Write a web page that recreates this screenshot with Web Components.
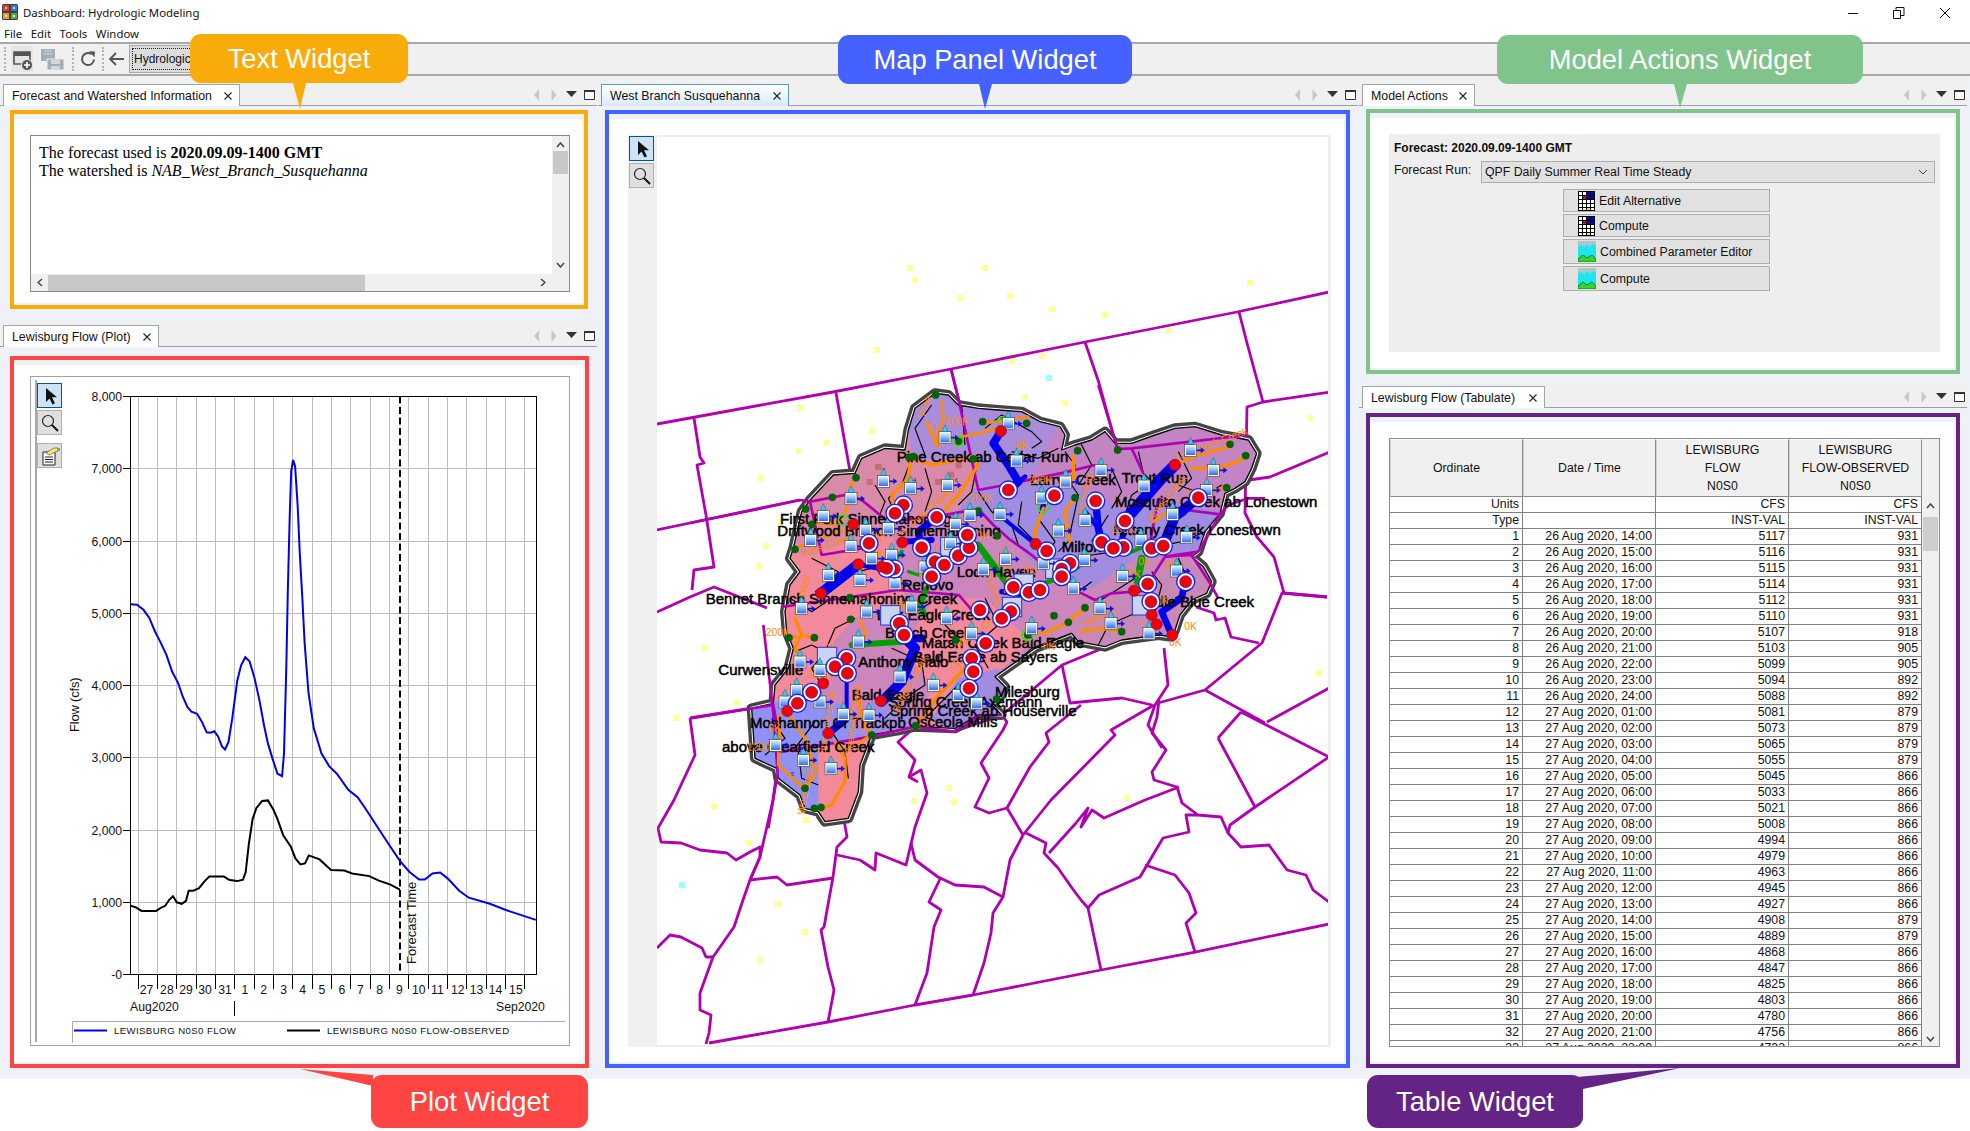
<!DOCTYPE html>
<html>
<head>
<meta charset="utf-8">
<title>Dashboard: Hydrologic Modeling</title>
<style>
  html, body { margin: 0; background: #fff; }
  body { width: 1970px; height: 1131px; overflow: hidden; font-family: "Liberation Sans", Arial, sans-serif; position: relative; }
  .workspace { display: grid; grid-template-columns: 600px 758px 612px; height: 1003px; background: #eef1f8; }
  .col { display: flex; flex-direction: column; }
</style>
</head>
<body>
<app-titlebar></app-titlebar>
<app-menubar></app-menubar>
<app-toolbar></app-toolbar>
<div class="workspace">
  <div class="col" style="padding-left:3px">
    <view-pane label="Forecast and Watershed Information" style="--tw:237px;--top:8px;--gap:4px;--mx:7px;--w:578px;--h:199px;--c:#f9ab0a;--end:597px"><text-view></text-view></view-pane>
    <view-pane label="Lewisburg Flow (Plot)" style="--tw:156px;--top:3px;--gap:9px;--mx:7px;--w:579px;--h:712px;--c:#ff4444;--end:597px;margin-top:13px"><plot-view></plot-view></view-pane>
  </div>
  <div class="col" style="padding-left:1px">
    <view-pane active label="West Branch Susquehanna" style="--tw:188px;--top:8px;--gap:4px;--mx:4px;--w:745px;--h:958px;--c:#4561ff;--end:760px"><map-view></map-view></view-pane>
  </div>
  <div class="col" style="padding-left:4px">
    <view-pane label="Model Actions" style="--tw:113px;--top:8px;--gap:3px;--mx:4px;--w:594px;--h:265px;--c:#80c48c;--end:608px"><actions-view></actions-view></view-pane>
    <view-pane label="Lewisburg Flow (Tabulate)" style="--tw:183px;--top:3px;--gap:5px;--mx:4px;--w:594px;--h:655px;--c:#642485;--end:608px;margin-top:9px"><table-view></table-view></view-pane>
  </div>
</div>
<call-out label="Text Widget" color="#f9ab0a" box="190,34,218,49" tail="103,49 116,49 110,75"></call-out>
<call-out label="Map Panel Widget" color="#4561ff" box="838,35,294,49" tail="141,49 154,49 147,74"></call-out>
<call-out label="Model Actions Widget" color="#80c48c" box="1497,35,366,49" tail="177,49 190,49 183,73"></call-out>
<call-out label="Plot Widget" color="#ff4444" box="371,1075,217,53" tail="2,0 2,11 -71,-6"></call-out>
<call-out label="Table Widget" color="#642485" box="1367,1075,216,53" tail="210,2 216,14 313,-7"></call-out>

<script>
const SANS = '"Liberation Sans", Arial, sans-serif';

class AppTitlebar extends HTMLElement {
  constructor() {
    super();
    this.attachShadow({ mode: "open" });
  }

  connectedCallback() {
    this.shadowRoot.innerHTML = /* html */`
    <style>
      :host { display: flex; align-items: center; height: 25px; background: #fff; font: 11.4px "Noto Sans", sans-serif; color: #111; }
      .logo { margin: 0 5px 1px 2px; }
      .name { flex: 1; }
      .btn { width: 46px; display: flex; justify-content: center; }
    </style>
    <svg class="logo" width="16" height="16" viewBox="0 0 16 16">
      <rect width="16" height="16" rx="1.5" fill="#3d4048"/>
      <rect x="1" y="1" width="6" height="6" fill="#e23b2e"/><rect x="9" y="1" width="6" height="6" fill="#2f7fd0"/>
      <rect x="1" y="9" width="6" height="6" fill="#f29a1f"/><rect x="9" y="9" width="6" height="6" fill="#58a846"/>
      <path d="M3 3h2v2H3zM11 3h2v2h-2zM3 11h2v2H3zM11 11h2v2h-2z" fill="#fff" opacity=".7"/>
    </svg>
    <span class="name">Dashboard: Hydrologic Modeling</span>
    <span class="btn"><svg width="12" height="12"><path d="M1 6.5h10" stroke="#111"/></svg></span>
    <span class="btn"><svg width="12" height="12"><path d="M.5 3.5h7v8h-7zM3 3V.5h8v8H8" fill="none" stroke="#111"/></svg></span>
    <span class="btn" style="margin-right:2px"><svg width="12" height="12"><path d="M1 1l10 10M11 1L1 11" stroke="#111"/></svg></span>`;
  }
}
customElements.define("app-titlebar", AppTitlebar);

class AppMenubar extends HTMLElement {
  constructor() {
    super();
    this.attachShadow({ mode: "open" });
    this.shadowRoot.innerHTML = /* html */`
    <style>
      :host { display: flex; gap: 8.5px; height: 17px; padding-left: 4px; align-items: center; font: 11.4px "Noto Sans", sans-serif; color: #111; background: #fff; }
    </style>
    <span>File</span><span>Edit</span><span>Tools</span><span>Window</span>`;
  }
}
customElements.define("app-menubar", AppMenubar);

class AppToolbar extends HTMLElement {
  constructor() {
    super();
    this.attachShadow({ mode: "open" });
    this.shadowRoot.innerHTML = /* html */`
    <style>
      :host { display: flex; align-items: center; height: 30px; background: #f0f0f0; border-top: 2px solid #a8a8a8; border-bottom: 2px solid #a8a8a8; font: 12px "Liberation Sans", sans-serif; box-sizing: content-box; }
      .sep { width: 0; height: 24px; border-left: 2px dotted #b4b4b4; }
      svg { display: block; }
      .combo { width: 130px; height: 28px; box-sizing: border-box; border: 1px solid #a8a8a8; background: #dcdcdc; padding: 2px; margin-left: 4px; }
      .combo div { height: 100%; box-sizing: border-box; border: 1px dotted #222; line-height: 21px; padding-left: 1px; color: #111; }
    </style>
    <span class="sep" style="margin-left:4px"></span>
    <svg width="22" height="26" style="margin-left:5px;background:#e6e6e6" viewBox="0 0 22 26">
      <path d="M3 6h16v4H3z" fill="#555"/><path d="M3 6h16v12H3z" fill="none" stroke="#555" stroke-width="1.6"/>
      <circle cx="16" cy="19" r="5.5" fill="#555" stroke="#e6e6e6"/><path d="M13 19h6M16 16v6" stroke="#fff" stroke-width="1.6"/>
    </svg>
    <svg width="25" height="26" style="margin-left:7px" viewBox="0 0 25 26">
      <path d="M1 3h14v12H1z" fill="#a4adb6"/><path d="M4 5h8M4 8h8" stroke="#d8dde2"/>
      <path d="M7 13h17v11H7z" fill="#a4adb6" stroke="#f0f0f0"/><path d="M11 14h9v4h-9zM11 20h9v4h-9z" fill="#d4d9de"/>
    </svg>
    <span class="sep" style="margin-left:7px"></span>
    <svg width="18" height="18" style="margin-left:5px" viewBox="0 0 18 18">
      <path d="M15 9.5A6 6 0 1 1 12.5 4.2" fill="none" stroke="#555" stroke-width="2"/><path d="M10 1.2l6 .2-.5 6z" fill="#555"/>
    </svg>
    <span class="sep" style="margin-left:5px"></span>
    <svg width="16" height="16" style="margin-left:4px" viewBox="0 0 16 16">
      <path d="M16 8H2M8 2L2 8l6 6" fill="none" stroke="#555" stroke-width="1.8"/>
    </svg>
    <div class="combo" style="margin-left:5px"><div>Hydrologic</div></div>`;
  }
}
customElements.define("app-toolbar", AppToolbar);

class ViewPane extends HTMLElement {
  constructor() {
    super();
    this.attachShadow({ mode: "open" });
  }

  connectedCallback() {
    const active = this.hasAttribute("active");
    this.shadowRoot.innerHTML = /* html */`
    <style>
      :host { display: block; }
      .strip { display: flex; width: var(--end); box-sizing: border-box; height: calc(22px + var(--top)); padding-top: var(--top); background: #f0f0f0; border-bottom: 1px solid #9a9fa6; margin-left: -3px; padding-left: 3px; align-items: flex-end; }
      .tab { display: flex; justify-content: space-between; align-items: center; box-sizing: border-box; width: var(--tw); height: 22px; margin-bottom: -1px; padding: 0 6px 0 8px; border: 1px solid #a0a5ab; border-bottom: 0; background: #fff; font: 12.35px ${SANS}; color: #111; white-space: nowrap; }
      .tab.active { border-color: #5a9ac8; background: linear-gradient(#fff, #d9e9fa); }
      .ctl { margin-left: auto; margin-right: 2.5px; display: block; margin-bottom: 4px; }
      .frame { display: flex; flex-direction: column; box-sizing: border-box; width: var(--w); height: var(--h); margin: var(--gap) 0 0 var(--mx); border: 4px solid var(--c); background: #eef1f8; padding: 5px 2px 2px 0; }
      .inner { flex: 1; min-height: 0; background: #fff; padding: 16px 12px 11px 16px; display: flex; }
    </style>
    <div class="strip">
      <div class="tab ${active ? "active" : ""}">
        <span>${this.getAttribute("label")}</span>
        <svg width="10" height="10"><path d="M1.5 1.5l7 7M8.5 1.5l-7 7" stroke="#222" stroke-width="1.1"/></svg>
      </div>
      <svg class="ctl" width="62" height="12" viewBox="0 0 62 12">
        <path d="M6 0v12L1 6z" fill="#c8c8c8"/><path d="M18.500 0v12l5-6z" fill="#c8c8c8"/>
        <path d="M33 2h11l-5.500 6z" fill="#333"/><path d="M51.500 1.500h10v9h-10z" fill="#fff" stroke="#333"/><path d="M51 1h11v2H51z" fill="#333"/>
      </svg>
    </div>
    <div class="frame"><div class="inner"><slot></slot></div></div>`;
  }
}
customElements.define("view-pane", ViewPane);

class TextView extends HTMLElement {
  constructor() {
    super();
    this.attachShadow({ mode: "open" });
    this.shadowRoot.innerHTML = /* html */`
    <style>
      :host { display: grid; grid-template-columns: 1fr 17px; grid-template-rows: 1fr 17px; flex: 1; border: 1px solid #868a90; font: 16px/18px "Liberation Serif", serif; color: #000; background: #f0f0f0; }
      .text { background: #fff; padding: 8px 8px; }
      .vbar, .hbar { position: relative; display: flex; }
      .vbar { flex-direction: column; align-items: center; justify-content: space-between; padding: 6px 0; }
      .vthumb { width: 15px; height: 23px; background: #c8c8c8; margin-top: 3px; margin-bottom: auto; }
      .hbar { align-items: center; padding: 0 6px; }
      .hthumb { width: 317px; height: 16px; background: #c8c8c8; margin-left: 5px; margin-right: auto; }
      svg { display: block; }
    </style>
    <div class="text">The forecast used is <b>2020.09.09-1400 GMT</b><br>The watershed is <i>NAB_West_Branch_Susquehanna</i></div>
    <div class="vbar">
      <svg width="9" height="6"><path d="M1 5l3.500-4L8 5" fill="none" stroke="#444" stroke-width="1.500"/></svg>
      <div class="vthumb"></div>
      <svg width="9" height="6"><path d="M1 1l3.500 4L8 1" fill="none" stroke="#444" stroke-width="1.500"/></svg>
    </div>
    <div class="hbar">
      <svg width="6" height="9"><path d="M5 1L1 4.500 5 8" fill="none" stroke="#444" stroke-width="1.500"/></svg>
      <div class="hthumb"></div>
      <svg width="6" height="9"><path d="M1 1l4 3.500L1 8" fill="none" stroke="#444" stroke-width="1.500"/></svg>
    </div>
    <div></div>`;
  }
}
customElements.define("text-view", TextView);

class ToolStrip extends HTMLElement {
  constructor() {
    super();
    this.attachShadow({ mode: "open" });
  }

  connectedCallback() {
    const icons = {
      arrow: `<path d="M7 3l0 14 3.500-3.500 3 6 2.500-1.200-3-6 5 0z" fill="#111"/>`,
      zoom: `<circle cx="9" cy="9" r="5.500" fill="none" stroke="#222" stroke-width="1.200"/><path d="M13 13l6 6" stroke="#111" stroke-width="2"/>`,
      props: `<path d="M4 7h12v13H4z" fill="#fff" stroke="#222"/><path d="M6 12h8M6 14.500h8M6 17h8" stroke="#222"/><path d="M7 8l8-5 4 0 0 3-9 4z" fill="#ffe96a" stroke="#444" stroke-width=".6"/><path d="M18 3h3v3h-3z" fill="#4fc24f"/>`
    };
    const items = this.getAttribute("items").split(",");
    const size = this.getAttribute("size").split("x").map(Number);
    this.shadowRoot.innerHTML = /* html */`
    <style>
      :host { display: flex; flex-direction: column; gap: 2px; }
      .b { box-sizing: border-box; width: ${size[0]}px; height: ${size[1]}px; background: #dfdfdf; border: 1px solid #b0b0b0; display: flex; align-items: center; justify-content: center; }
      .b.on { background: #cce4f7; border-color: #005499; }
      .b.gap { margin-top: 6px; }
    </style>
    ${items.map((k, i) => `<div class="b ${i === 0 ? "on" : ""} ${k === "props" ? "gap" : ""}"><svg width="22" height="22" viewBox="0 0 22 22">${icons[k]}</svg></div>`).join("")}`;
  }
}
customElements.define("tool-strip", ToolStrip);

class PlotView extends HTMLElement {
  constructor() {
    super();
    this.attachShadow({ mode: "open" });
  }

  // points were read off a stretched crop, so both axes have their own scale
  static path(pts) {
    return pts.map((p, i) => (i ? "L" : "M") + (p[0] / 2.613).toFixed(1) + " " + (340 + p[1] / 1.983).toFixed(1)).join("");
  }

  connectedCallback() {
    const blue = [[341,524],[358,525],[375,535],[390,551],[405,578],[420,600],[435,625],[450,658],[465,680],[478,708],[490,728],[500,737],[515,741],[528,758],[540,778],[550,779],[560,776],[570,786],[580,806],[588,812],[597,797],[607,750],[620,675],[630,645],[641,629],[652,637],[665,670],[678,715],[690,765],[700,800],[712,830],[725,860],[737,865],[742,820],[748,650],[752,500],[757,350],[761,260],[766,238],[771,250],[778,330],[783,420],[790,510],[796,600],[806,700],[820,770],[840,820],[860,845],[880,860],[910,892],[935,907],[960,935],[990,970],[1020,1005],[1045,1033],[1070,1055],[1095,1070],[1110,1070],[1130,1058],[1150,1056],[1170,1068],[1200,1092],[1225,1106],[1280,1118],[1320,1130],[1400,1150]];
    const black = [[341,1122],[355,1125],[370,1132],[390,1132],[408,1132],[420,1126],[432,1122],[442,1110],[452,1103],[462,1115],[475,1118],[486,1112],[493,1092],[505,1092],[520,1087],[535,1073],[547,1064],[585,1064],[600,1071],[620,1073],[635,1070],[642,1055],[650,1000],[660,950],[670,928],[685,914],[700,913],[715,932],[725,950],[740,982],[760,1005],[772,1028],[785,1040],[797,1038],[807,1022],[835,1030],[865,1051],[900,1052],[920,1058],[965,1063],[990,1072],[1020,1080],[1045,1090]];
    const gridZ = [361,412,462,513,563,613,664,714,765,816,866,917,968,1018,1068,1119,1169,1219,1271,1321,1371];
    const labZ = [383,436,486,536,588,640,689,741,791,841,893,942,992,1044,1094,1143,1196,1245,1295,1348];
    const days = ["27","28","29","30","31","1","2","3","4","5","6","7","8","9","10","11","12","13","14","15"];
    const L = 130.5, R = 536.5, T = 396.5, B = 974.5;
    let grid = "", ticks = "", ylab = "", xlab = "";
    gridZ.forEach(z => {
      const x = (z / 2.613).toFixed(1);
      grid += `<path d="M${x} ${T}V${B}" stroke="#bdbdbd"/>`;
      ticks += `<path d="M${x} ${B}v14" stroke="#000"/>`;
    });
    for (let i = 0; i <= 8; i++) {
      const y = B - i * (B - T) / 8;
      if (i > 0 && i < 8) grid += `<path d="M${L} ${y}H${R}" stroke="#bdbdbd"/>`;
      ticks += `<path d="M123 ${y}H${L}" stroke="#000"/>`;
      const t = i === 0 ? "-0" : i + ",000";
      ylab += `<text x="122" y="${y + 4.500}" text-anchor="end">${t}</text>`;
    }
    labZ.forEach((z, i) => { xlab += `<text x="${(z / 2.613).toFixed(1)}" y="994" text-anchor="middle">${days[i]}</text>`; });
    this.shadowRoot.innerHTML = /* html */`
    <style>
      :host { display: flex; flex: 1; border: 1px solid #a0a0a0; margin: -5px 1px 0 0; height: 670px; box-sizing: border-box; }
      .side { width: 33px; flex: none; box-sizing: border-box; padding: 3px 0 0 0; margin: 3px 0 3px 4px; border-left: 2px solid #a8a8a8; }
      svg.c { display: block; flex: none; }
      text { font: 12.2px ${SANS}; fill: #111; }
    </style>
    <tool-strip class="side" items="arrow,zoom,props" size="25x25"></tool-strip>
    <svg class="c" width="501" height="668" viewBox="68 377 501 668">
      <g shape-rendering="crispEdges">${grid}</g>
      <rect x="${L}" y="${T}" width="${R - L}" height="${B - T}" fill="none" stroke="#000" shape-rendering="crispEdges"/>
      <g shape-rendering="crispEdges">${ticks}</g>
      ${ylab}${xlab}
      <text x="130" y="1011">Aug2020</text><text x="496" y="1011">Sep2020</text>
      <path d="M234.500 1001v15" stroke="#000"/>
      <text transform="translate(79 732) rotate(-90)" style="font-size:13px;letter-spacing:-.2px">Flow (cfs)</text>
      <path d="M400 396.500V974.500" stroke="#000" stroke-width="2" stroke-dasharray="7 3.500"/>
      <text transform="translate(416 964) rotate(-90)" style="font-size:13px">Forecast Time</text>
      <path d="${PlotView.path(black)}" fill="none" stroke="#000" stroke-width="2"/>
      <path d="${PlotView.path(blue)}" fill="none" stroke="#0000f0" stroke-width="2"/>
      <path d="M72.500 1043V1021.500H565" fill="none" stroke="#a8a8a8"/>
      <path d="M74 1030.500h33" stroke="#0000f0" stroke-width="2"/><path d="M287 1030.500h33" stroke="#000" stroke-width="2"/>
      <text x="114" y="1034" style="font-size:9.600px;letter-spacing:.4px">LEWISBURG N0S0 FLOW</text>
      <text x="327" y="1034" style="font-size:9.600px;letter-spacing:.42px">LEWISBURG N0S0 FLOW-OBSERVED</text>
    </svg>`;
  }
}
customElements.define("plot-view", PlotView);

class MapView extends HTMLElement {
  constructor() {
    super();
    this.attachShadow({ mode: "open" });
  }

  static pl(points) {
    return points.map(l => `<polyline points="${l}"/>`).join("");
  }

  connectedCallback() {
    // county boundaries, page coordinates
    const county = [
      "657,424 690,418 833,392 951,369 1085,342 1237,312 1329,292",
      "1085,342 1099,383 1116,445",
      "1239,312 1247,343 1263,402 1247,407 1245,513 1257,537 1274,557 1284,593 1327,597",
      "1263,402 1330,392", "1249,480 1270,477 1330,452",
      "951,369 958,397 968,452 980,490", "836,393 851,477",
      "694,418 700,457 704,463 697,465 706,515 714,567 694,570 692,590",
      "657,530 690,523 800,500", "657,612 690,597 714,587 767,608",
      "690,718 772,705",
      "690,718 695,755 674,800 658,828 661,842 681,843 700,850 727,853 736,860 750,852 760,847 760,857 750,880",
      "777,770 773,800 760,857 750,880 743,900 734,927 713,957 700,993 700,1010 711,1015 709,1033 706,1044",
      "750,880 777,877 787,885 833,878",
      "657,948 670,935 681,937 702,948 706,957 713,957",
      "844,820 847,837 837,847 833,877 824,927 821,930 828,967 834,990 828,1022",
      "837,855 860,860 875,870 876,853 906,865 915,827 927,793 921,770 909,777 918,782",
      "915,727 898,742 915,760 909,777",
      "911,843 915,860 938,877 955,885 984,887 1003,897 993,913 991,933 984,963 973,995",
      "941,877 929,902 941,910 934,927 927,973 915,1005",
      "1023,835 1010,860 1003,897", "1007,808 1023,835",
      "1007,808 989,813 975,807 989,778 981,763 1003,730 1007,722 1002,715",
      "1007,808 1030,767 1049,742 1046,733 1081,705",
      "1023,835 1051,800 1115,735 1111,730 1154,705",
      "953,732 1002,715 1062,665 1118,642 1172,635",
      "1062,665 1070,703 1122,698 1152,705",
      "1158,703 1205,690 1262,643 1282,593 1327,597",
      "1205,690 1265,723", "1241,712 1329,757", "1267,722 1329,688",
      "1218,738 1255,807 1329,757", "1218,738 1241,712",
      "1255,807 1230,825 1228,833 1241,847 1269,845 1287,870 1306,875 1313,890 1329,902",
      "1228,833 1221,817 1198,815 1182,803 1177,787 1154,780 1152,772 1166,750 1152,733 1157,717 1159,700",
      "1179,787 1145,800 1104,818 1092,810 1081,827 1088,808 1076,823 1049,853",
      "1198,815 1186,815 1189,832 1163,838 1140,877 1099,895 1088,908 1081,900 1072,888 1058,868 1044,853 1046,843 1026,833",
      "1088,908 1101,970", "1145,865 1175,875 1189,893 1196,913 1186,923 1195,952",
      "709,1043 828,1022 915,1005 973,995 1101,970 1195,952 1329,924",
      "1164,648 1168,685 1155,705 1148,725 1162,748", "1196,607 1214,613 1216,620 1225,618 1231,637 1259,643"
    ];
    const dots = [[910,268],[985,268],[915,280],[960,298],[1010,296],[1052,309],[1105,315],[1250,283],[1169,330],[877,350],[1012,361],[1042,356],[1025,397],[800,408],[827,443],[799,451],[761,478],[872,431],[780,522],[766,546],[759,566],[704,648],[737,703],[1065,403],[1311,418],[1319,673],[949,788],[914,801],[954,802],[1127,798],[714,807],[676,718],[778,904],[805,932],[760,960],[749,843],[806,820]];
    const cyan = [[1049,378],[682,885]];
    // everything below: basin coordinates, 3 units to a page pixel from (745,385)
    const outline = "570,25 610,30 640,60 700,70 760,75 830,80 885,110 945,125 960,150 950,195 990,180 1040,165 1080,140 1110,175 1160,175 1230,150 1290,130 1350,125 1430,150 1510,165 1535,205 1520,250 1500,290 1470,310 1440,325 1425,385 1380,440 1360,500 1340,515 1375,545 1400,590 1385,625 1340,645 1305,690 1290,735 1280,755 1240,750 1130,765 1080,785 1000,770 980,745 870,790 750,875 780,905 770,930 740,960 770,990 700,990 630,1030 510,1025 465,1035 380,1050 345,1140 340,1220 310,1300 240,1310 220,1280 180,1270 165,1230 100,1180 95,1150 30,1120 20,970 85,955 90,900 130,850 145,790 125,740 120,680 135,600 165,560 135,520 145,490 170,380 195,345 265,270 330,265 350,220 420,190 480,195 490,135 510,70";
    const fills = [
      ["#cc86bc", outline],
      ["#d88aa8", "0,150 500,150 700,220 700,380 440,420 200,520 0,520"],
      ["#a98cdc", "480,0 980,0 980,240 850,290 790,310 700,320 690,230 500,220"],
      ["#c284c2", "950,100 1600,100 1600,330 1400,330 1240,340 1150,390 1050,320 950,300 850,290"],
      ["#a08ce0", "690,310 860,280 1050,320 1150,390 1240,340 1430,380 1360,510 1200,500 1040,610 900,570 790,460 700,370 620,400"],
      ["#f28a9c", "0,500 210,510 440,420 480,640 330,700 240,800 260,900 150,960 0,960"],
      ["#cc86bc", "620,400 790,460 900,570 1040,620 1000,680 880,760 800,800 720,640 660,620 520,640 470,620 440,440"],
      ["#c888b8", "1040,610 1200,500 1350,510 1440,620 1300,760 1130,780 980,760 880,770 1000,680"],
      ["#f28a9c", "560,640 720,640 860,770 750,870 620,1040 520,1040 560,900 470,790"],
      ["#cc86bc", "330,700 480,640 570,640 470,790 560,900 510,1030 380,1060 350,1000 300,950 240,800"],
      ["#8f92f4", "0,950 150,950 300,960 360,1060 280,1100 250,1330 0,1330"],
      ["#a28ce2", "640,880 760,850 800,1000 620,1040 560,1000"],
      ["#a28ce2", "360,1060 380,950 480,930 520,1040 380,1060"],
      ["#f28a9c", "220,1090 370,1060 340,1330 220,1330"]
    ];
    const clines = [
      "500,220 470,300 430,340 450,385", "390,300 420,350 400,400", "540,250 560,320 540,380", "700,220 680,320 640,360",
      "720,130 770,90 860,140 890,170 860,190", "960,200 990,240 980,300 1000,330 970,470 940,500", "1180,200 1195,265 1220,290 1160,330 1140,390",
      "700,320 740,380 800,420 820,480 850,500", "830,350 820,420 870,470", "1430,300 1380,330 1300,300", "1380,440 1310,470 1260,480",
      "1090,390 1040,470", "960,560 1040,510 1110,500", "1040,590 1000,620 1040,640", "1200,520 1170,580 1060,650",
      "1300,520 1340,610 1290,640", "200,520 280,560 250,600 210,620", "135,640 200,680 260,640 330,650", "330,700 270,730 240,800 200,780 150,800",
      "470,630 500,690 560,650", "640,680 600,720 640,760 600,790", "720,640 760,720 690,780 730,850",
      "440,790 530,830 540,900 480,940", "240,800 200,850 230,900", "300,960 260,1040 300,1100 310,1180", "160,1100 170,1180 220,1200", "210,1010 150,1090 210,1100",
      "420,1000 470,950", "540,1000 640,900", "980,745 860,790 760,880", "1060,780 1090,720 1180,680",
      "1000,160 1040,240 1000,300", "1100,250 1130,320 1100,370", "1300,200 1340,280 1300,320", "560,60 510,130 540,210", "650,60 660,180", "800,200 880,220 940,190", "880,400 930,470 900,520", "1220,560 1250,600 1230,680", "340,560 420,540 470,580", "80,1000 120,1060 60,1110"
    ];
    const mag = [
      "618,-48 639,36 700,315 780,300 960,262 1050,240", "1060,0 1118,192 1160,190 1510,150", "1160,190 1195,265",
      "-165,414 165,345 195,350 300,330 350,345 430,410 570,395 700,372 745,420 790,460 860,510 920,560 1000,620 1050,645 1100,625 1195,618 1260,515 1340,510 1395,595 1420,640",
      "195,350 230,510 350,490", "110,666 460,615 642,630 680,675", "55,720 85,985 98,1165 70,1330", "-165,1000 85,960 110,1100 290,1070 380,1055 510,1025 625,1040 700,995 770,990",
      "1240,340 1300,372 1425,388 1360,500 1260,515", "1425,388 1450,360 1510,340 1560,340", "1240,340 1210,500"
    ];
    const blue = [
      [24, "768,138 745,175 790,240 820,290 795,315"], [14, "795,315 840,275"], [12, "750,380 870,477"], [34, "1290,240 1250,280 1140,405"], [22, "1052,348 1060,430 1070,470"], [30, "1360,338 1290,395 1255,480"],
      [22, "575,397 520,440 530,488"], [32, "340,538 228,625"], [16, "340,538 430,555"], [18, "470,470 560,465"], [14, "1060,430 1020,380"], [18, "1140,420 1130,470"], [16, "900,340 890,380"],
      [30, "490,770 510,790 470,890 410,950"], [12, "305,865 305,980"], [22, "250,1045 300,1005"], [20, "1320,590 1310,640 1250,680 1280,750"], [24, "480,760 530,760"], [16, "770,620 840,630"], [20, "520,490 590,540"]
    ];
    const green = [
      [20, "700,480 760,560 790,600"], [16, "545,610 525,660 540,690"], [22, "1190,520 1178,590"], [14, "1000,545 940,580 880,600"], [18, "320,780 400,775 470,770"], [12, "470,500 440,540"], [10, "490,560 520,570"], [12, "1160,500 1210,480"], [8, "770,100 790,120"]
    ];
    const orange = [
      [8, "590,50 595,100 570,180"], [8, "545,115 575,180"], [10, "500,222 560,240 680,215 700,240 640,330 580,395"], [8, "600,165 700,145 760,130"], [8, "720,115 850,95"],
      [10, "495,230 490,280 440,330 450,385"], [8, "320,290 310,360 280,420 205,415"], [8, "150,490 230,460 320,430"], [10, "985,215 985,280 970,300"], [10, "990,340 960,380 975,470"], [10, "895,370 870,440 875,470"],
      [10, "1500,220 1420,250 1340,250"], [10, "1455,185 1360,210 1290,240"], [8, "1445,310 1330,320"], [10, "1285,370 1225,410"], [8, "780,490 790,570 780,620"],
      [10, "132,758 165,755 150,790 175,825"], [10, "210,760 170,750 150,700"], [11, "512,1022 590,920 670,840 690,820"], [10, "380,1050 355,1010 340,940"], [10, "1020,670 970,710 900,745 850,740"], [10, "1130,740 1070,730 1010,740"],
      [9, "105,990 100,1140 170,1205"], [9, "130,990 180,1060 215,1160 180,1210"], [10, "270,1070 300,1120 300,1190 260,1260 230,1270"], [8, "380,1050 330,1080"], [8, "345,705 365,755"]
    ];
    const greens = [[572,30],[713,110],[845,115],[642,170],[492,217],[505,215],[685,222],[998,197],[1118,195],[1455,178],[1502,212],[1445,308],[990,338],[333,278],[262,337],[182,372],[200,418],[150,493],[700,378],[757,452],[315,638],[317,703],[132,758],[208,758],[632,765],[970,712],[927,692],[1020,668],[1130,740],[848,750],[755,942],[512,1022],[380,1050],[180,1210],[208,1270],[228,1267]];
    const gauges = [[415,283],[497,305],[608,295],[318,335],[235,388],[197,460],[318,478],[362,430],[430,425],[380,515],[440,505],[632,412],[617,470],[675,385],[765,382],[815,222],[790,110],[600,152],[890,333],[962,285],[1068,250],[1197,297],[1020,400],[940,432],[1188,460],[1283,382],[1325,452],[1337,190],[1405,250],[1385,310],[1133,568],[1295,552],[1018,520],[985,605],[895,530],[782,517],[715,548],[345,580],[250,565],[450,590],[540,540],[500,660],[170,665],[365,675],[605,695],[340,765],[680,740],[860,725],[1098,710],[1212,740],[1065,665],[165,825],[225,850],[565,895],[465,870],[640,925],[695,950],[155,910],[120,945],[225,945],[295,982],[372,985],[92,1075],[175,1120],[258,1145]];
    const pads = [[435,690],[1190,660],[245,815],[800,665],[615,485],[930,550],[835,595]];
    const ringed = [[475,360],[450,385],[575,397],[530,488],[372,475],[570,530],[598,540],[640,512],[672,488],[667,450],[448,552],[425,550],[560,575],[790,315],[928,332],[1052,348],[1140,408],[1070,472],[1135,487],[1105,490],[1220,490],[1255,483],[905,498],[975,535],[950,552],[950,575],[805,607],[852,622],[885,615],[1208,597],[1322,590],[1360,338],[1218,650],[463,715],[477,750],[705,675],[798,680],[770,700],[722,775],[680,820],[685,860],[672,910],[305,820],[270,845],[307,865],[200,922],[157,955]];
    const reds = [[768,138],[325,418],[472,472],[340,538],[228,625],[1290,240],[872,477],[1167,617],[1235,718],[1220,690],[1282,750],[235,895],[127,978],[250,1045],[408,948],[410,545]];
    const names = [
      [455,232,"Pine Creek ab Cedar Run"],[105,416,"First Fork Sinnemahoning"],[97,453,"Driftwood Branch Sinnemahoning"],[-118,657,"Bennet Branch Sinnemahoning Creek"],
      [855,300,"Larrys Creek"],[1130,295,"Trout Run"],[1110,365,"Mosquito Creek ab Lonestown"],[1105,450,"Nittany Creek Lonestown"],[950,500,"Milton"],[470,615,"Renovo"],[635,575,"Lock Haven"],
      [395,705,"Lick Eagle Creek"],[420,760,"Beech Creek"],[530,790,"Marsh Creek Bald Eagle"],[1160,665,"Middle Blue Creek"],[505,830,"Bald Eagle ab Sayers"],[-80,870,"Curwensville"],[340,845,"Anthony Halo"],
      [320,945,"Bald Eagle"],[750,935,"Milesburg"],[430,965,"Spring Creek Axemann"],[435,993,"Spring Creek ab Houserville"],[490,1027,"Osceola Mills"],[15,1030,"Moshannon Cr Trackpb"],[-69,1100,"above Clearfield Creek"]
    ];
    const kLabels = [[600,120,"200K"],[812,192,"0K"],[850,298,"200K"],[672,350,"200K"],[1098,445,"200K"],[378,470,"0K"],[450,450,"0K"],[380,518,"0K"],[570,503,"0K"],[695,462,"0K"],[920,548,"0K"],[1025,535,"0K"],[1180,540,"0K"],[1262,552,"0K"],[1150,580,"0K"],[1232,656,"0K"],[520,575,"600K"],[835,570,"0K"],[62,752,"200K"],[190,880,"1000K"],[452,672,"0K"],[240,800,"0K"],[1318,735,"0K"],[1272,782,"0K"],[893,796,"0K"],[618,852,"0K"],[435,735,"0K"],[5,1098,"1200K"],[70,1040,"0K"],[1165,650,"0K"]];
    const streams = [[175,515,-18,"West Creek"],[505,430,-42,"Pine Creek"],[548,115,68,"Creek"],[540,95,-70,"Pine"],[1010,400,-75,"Lycoming"],[1220,410,-50,"Antes Creek"],[1295,225,-20,"Loyalsock Creek"],[460,985,-62,"Buffalo Creek"],[180,640,-75,"West"],[320,1120,-82,"Clearfield Creek"],[240,1110,-80,"Susquehanna"],[720,570,70,"Fishing"],[1020,730,-30,"Sinking"],[640,790,-35,"Marsh Creek"],[178,1290,-80,"West Branch"]];

    const gauge = (x, y) => `<use href="#gauge" x="${x}" y="${y}"/>`;
    this.shadowRoot.innerHTML = /* html */`
    <style>
      :host { display: flex; flex: 1; height: 912px; background: #f0f0f0; margin: 0 1px 0 3px; }
      .side { width: 29px; flex: none; box-sizing: border-box; padding: 1px 0 0 1px; }
      .canvas { flex: none; width: 671px; height: 908px; background: #fff; border: 2px solid #eeeeee; border-left: 0; }
      svg { display: block; }
      .lines polyline { fill: none; }
      .name text { font: 45px ${SANS}; fill: #000; stroke: #000; stroke-width: 1.500px; }
      .k text { font: 31px ${SANS}; fill: #ff8c00; }
    </style>
    <tool-strip class="side" items="arrow,zoom" size="25x25"></tool-strip>
    <div class="canvas">
    <svg width="671" height="908" viewBox="657 137 671 908">
      <defs>
        <linearGradient id="gb" x1="0" y1="0" x2="0" y2="1"><stop offset="0" stop-color="#d8f4ff"/><stop offset="1" stop-color="#2f6ee8"/></linearGradient>
        <clipPath id="bc"><polygon points="${outline}"/></clipPath>
        <g id="gauge">
          <rect x="-18" y="-12" width="36" height="36" fill="#fffbe8" stroke="#444" stroke-width="2"/>
          <rect x="-14" y="-8" width="28" height="28" fill="url(#gb)"/>
          <path d="M0 -32C5 -22 9 -18 7 -12H-7C-9 -18 -5 -22 0 -32z" fill="#35c8ea" stroke="#123" stroke-width="1"/>
          <path d="M18 6h14" stroke="#0a14e0" stroke-width="5"/><path d="M30 -3l12 9-12 9z" fill="#0a14e0"/>
        </g>
      </defs>
      <g fill="#ffff99">${dots.map(d => `<rect x="${d[0] - 3}" y="${d[1] - 3}" width="6" height="6"/>`).join("")}</g>
      <g fill="#99ffff">${cyan.map(d => `<rect x="${d[0] - 3}" y="${d[1] - 3}" width="6" height="6"/>`).join("")}</g>
      <g class="lines" stroke="#b000b0" stroke-width="2.800" stroke-linejoin="round">${MapView.pl(county)}</g>
      <g transform="translate(745 385) scale(.33333)">
        <polygon points="${outline}" fill="#fff" stroke="#444" stroke-width="30" stroke-linejoin="round"/>
        <polygon points="${outline}" fill="#fff" stroke="#fff" stroke-width="10" stroke-linejoin="round"/>
        <g clip-path="url(#bc)">
          ${fills.map(f => `<polygon points="${f[1]}" fill="${f[0]}"/>`).join("")}
          <g fill="#c07070"><rect x="390" y="237" width="20" height="18"/><rect x="365" y="282" width="18" height="18"/><rect x="570" y="282" width="18" height="18"/><rect x="610" y="260" width="18" height="18"/><rect x="632" y="232" width="18" height="18"/></g>
          <g class="lines" stroke="#000" stroke-width="3.500" stroke-linejoin="round">${MapView.pl(clines)}</g>
        </g>
        <polygon points="${outline}" fill="none" stroke="#000" stroke-width="4" stroke-linejoin="round"/>
        <g class="lines" stroke="#b000b0" stroke-width="8" stroke-linejoin="round">${MapView.pl(mag)}</g>
        <g class="lines" stroke-linejoin="round" stroke-linecap="round">
          ${blue.map(b => `<polyline points="${b[1]}" stroke="#0000f0" stroke-width="${b[0]}"/>`).join("")}
          ${green.map(b => `<polyline points="${b[1]}" stroke="#00a000" stroke-width="${b[0]}"/>`).join("")}
          ${orange.map(b => `<polyline points="${b[1]}" stroke="#ff8c00" stroke-width="${b[0]}"/>`).join("")}
        </g>
        <g class="name">${names.map(n => `<text x="${n[0]}" y="${n[1]}">${n[2]}</text>`).join("")}</g>
        <g style="font:44px ${SANS}" fill="#4b1050"><text x="412" y="262">7</text><text x="505" y="290">4</text><text x="630" y="292">6</text><text x="138" y="1172" fill="#1a1a90">5</text></g>
        <g class="k">${kLabels.map(k => `<text x="${k[0]}" y="${k[1]}">${k[2]}</text>`).join("")}
          ${streams.map(s => `<text transform="translate(${s[0]} ${s[1]}) rotate(${s[2]})">${s[3]}</text>`).join("")}
        </g>
        <g fill="#006400" stroke="#0d4a0d" stroke-width="1">${greens.map(g => `<circle cx="${g[0]}" cy="${g[1]}" r="11"/>`).join("")}</g>
        <g fill="none" stroke="#33e01c" stroke-width="5"><circle cx="640" cy="168" r="15"/><circle cx="295" cy="405" r="15"/><circle cx="772" cy="110" r="15"/><circle cx="895" cy="368" r="15"/><circle cx="848" cy="750" r="17"/></g>
        <g fill="#c8d4f4" stroke="#2438c8" stroke-width="3">${pads.map(p => `<rect x="${p[0] - 28}" y="${p[1] - 28}" width="58" height="58"/>`).join("")}</g>
        ${gauges.map(g => gauge(g[0], g[1])).join("")}
        ${ringed.map(r => `<circle cx="${r[0]}" cy="${r[1]}" r="27" fill="#fff" stroke="#1c1ce0" stroke-width="4"/><circle cx="${r[0]}" cy="${r[1]}" r="18" fill="#f40000" stroke="#1c1ce0" stroke-width="2"/>`).join("")}
        ${reds.map(r => `<circle cx="${r[0]}" cy="${r[1]}" r="17" fill="#f40000" stroke="#2020c0" stroke-width="1.500"/>`).join("")}
      </g>
    </svg>
    </div>`;
  }
}
customElements.define("map-view", MapView);

class ActionButton extends HTMLElement {
  constructor() {
    super();
    this.attachShadow({ mode: "open" });
  }

  connectedCallback() {
    const grid = `<svg width="17" height="20" viewBox="0 0 17 20"><rect width="17" height="20" fill="#fff"/><rect x="9" y="0" width="7" height="8" fill="#0000f0"/><rect x="4" y="4" width="4" height="4" fill="#e00000"/><rect x="9" y="16" width="4" height="4" fill="#ffe600"/><path d="M.5 0v20M4.500 0v20M8.500 0v20M12.500 0v20M16.500 0v20M0 .5h17M0 4.500h17M0 8.500h17M0 12.500h17M0 16.500h17M0 19.500h17" stroke="#000" fill="none"/></svg>`;
    const land = `<svg width="18" height="21" viewBox="0 0 18 21"><rect width="18" height="21" fill="#1ee6ee"/><path d="M0 0h18v5l-3-2-3 3-3-3-3 3-3-2-3 2z" fill="#a9c8c8"/><path d="M0 18l5-4 4 3 5-3 4 4v3H0z" fill="#2fd62f" stroke="#0a6a0a" stroke-width=".8"/></svg>`;
    this.shadowRoot.innerHTML = /* html */`
    <style>
      :host { display: flex; align-items: center; gap: 4px; box-sizing: border-box; width: 207px; height: var(--bh, 23px); padding-left: 14px; background: #e1e1e1; border: 1px solid #adadad; font: 12.300px ${SANS}; color: #111; }
      svg { display: block; }
    </style>
    ${this.getAttribute("icon") === "grid" ? grid : land}<span><slot></slot></span>`;
  }
}
customElements.define("action-button", ActionButton);

class ActionsView extends HTMLElement {
  constructor() {
    super();
    this.attachShadow({ mode: "open" });
    this.shadowRoot.innerHTML = /* html */`
    <style>
      :host { display: flex; flex-direction: column; flex: 1; height: 218px; background: #eeeeee; padding: 7px 5px 0 5px; box-sizing: border-box; font: 12.300px ${SANS}; color: #111; margin: 0 2px 0 3px; }
      b { display: block; height: 15px; line-height: 15px; font-size: 12px; }
      .run { display: flex; margin-top: 5px; }
      .run span { width: 87px; padding-top: 2px; }
      .combo { flex: 1; height: 22px; box-sizing: border-box; border: 1px solid #adadad; background: #e1e1e1; display: flex; justify-content: space-between; align-items: center; padding: 0 6px 0 3px; margin-top: 0; }
      .btns { display: flex; flex-direction: column; gap: 2px; margin: 6px 0 0 169px; }
    </style>
    <b>Forecast: 2020.09.09-1400 GMT</b>
    <div class="run"><span>Forecast Run:</span>
      <div class="combo">QPF Daily Summer Real Time Steady
        <svg width="10" height="6"><path d="M1 1l4 4 4-4" fill="none" stroke="#444"/></svg>
      </div>
    </div>
    <div class="btns">
      <action-button icon="grid">Edit Alternative</action-button>
      <action-button icon="grid">Compute</action-button>
      <action-button icon="land" style="--bh:25px">Combined Parameter Editor</action-button>
      <action-button icon="land" style="--bh:25px">Compute</action-button>
    </div>`;
  }
}
customElements.define("actions-view", ActionsView);

class TableView extends HTMLElement {
  constructor() {
    super();
    this.attachShadow({ mode: "open" });
  }

  connectedCallback() {
    const flow = [5117,5116,5115,5114,5112,5110,5107,5103,5099,5094,5088,5081,5073,5065,5055,5045,5033,5021,5008,4994,4979,4963,4945,4927,4908,4889,4868,4847,4825,4803,4780,4756,4732];
    const obs = [931,931,931,931,931,931,918,905,905,892,892,879,879,879,879,866,866,866,866,866,866,866,866,866,879,879,866,866,866,866,866,866,866];
    const row = (a, b, c, d) => `<tr><td>${a}</td><td>${b}</td><td>${c}</td><td>${d}</td></tr>`;
    let rows = row("Units", "", "CFS", "CFS") + row("Type", "", "INST-VAL", "INST-VAL");
    flow.forEach((f, i) => {
      const h = 14 + i;
      const stamp = h <= 24
        ? `26 Aug 2020, ${h}:00`
        : `27 Aug 2020, ${String(h - 24).padStart(2, "0")}:00`;
      rows += row(i + 1, stamp, f, obs[i]);
    });
    this.shadowRoot.innerHTML = /* html */`
    <style>
      :host { display: flex; flex: 1; height: 609px; box-sizing: border-box; border: 1px solid #8c8c8c; font: 12.300px ${SANS}; color: #111; background: #f0f0f0; margin: 0 2px 0 3px; }
      .scroll { width: 532px; overflow: hidden; flex: none; background: #fff; }
      table { border-collapse: separate; border-spacing: 0; table-layout: fixed; width: 532px; }
      col { width: 133px; }
      th { height: 58px; box-sizing: border-box; padding: 0; background: #f0f0f0; font-weight: normal; line-height: 18px; border: 1px solid; border-color: #fff #8a8a8a #8a8a8a #d0d0d0; }
      td { height: 16px; box-sizing: border-box; padding: 0 3px 0 0; text-align: right; line-height: 15px; border-right: 1px solid #808080; border-bottom: 1px solid #808080; white-space: nowrap; }
      td:first-child { border-left: 0; }
      .bar { flex: 1; display: flex; flex-direction: column; align-items: center; padding-top: 64px; }
      .thumb { width: 15px; height: 34px; background: #cdcdcd; margin-top: 4px; margin-bottom: auto; }
      svg { display: block; margin-bottom: 4px; }
    </style>
    <div class="scroll">
      <table>
        <colgroup><col><col><col><col></colgroup>
        <tr><th>Ordinate</th><th>Date / Time</th><th>LEWISBURG<br>FLOW<br>N0S0</th><th>LEWISBURG<br>FLOW-OBSERVED<br>N0S0</th></tr>
        ${rows}
      </table>
    </div>
    <div class="bar">
      <svg width="9" height="6"><path d="M1 5l3.500-4L8 5" fill="none" stroke="#444" stroke-width="1.500"/></svg>
      <div class="thumb"></div>
      <svg width="9" height="6"><path d="M1 1l3.500 4L8 1" fill="none" stroke="#444" stroke-width="1.500"/></svg>
    </div>`;
  }
}
customElements.define("table-view", TableView);

class CallOut extends HTMLElement {
  constructor() {
    super();
    this.attachShadow({ mode: "open" });
  }

  connectedCallback() {
    const [x, y, w, h] = this.getAttribute("box").split(",");
    const c = this.getAttribute("color");
    this.shadowRoot.innerHTML = /* html */`
    <style>
      :host { position: absolute; left: ${x}px; top: ${y}px; width: ${w}px; height: ${h}px; display: flex; align-items: center; justify-content: center; background: ${c}; border-radius: 11px; color: #fff; font: 27.300px ${SANS}; }
      svg { position: absolute; left: 0; top: 0; overflow: visible; }
    </style>
    <svg width="${w}" height="${h}"><polygon points="${this.getAttribute("tail")}" fill="${c}"/></svg>
    <span>${this.getAttribute("label")}</span>`;
  }
}
customElements.define("call-out", CallOut);
</script>
</body>
</html>
